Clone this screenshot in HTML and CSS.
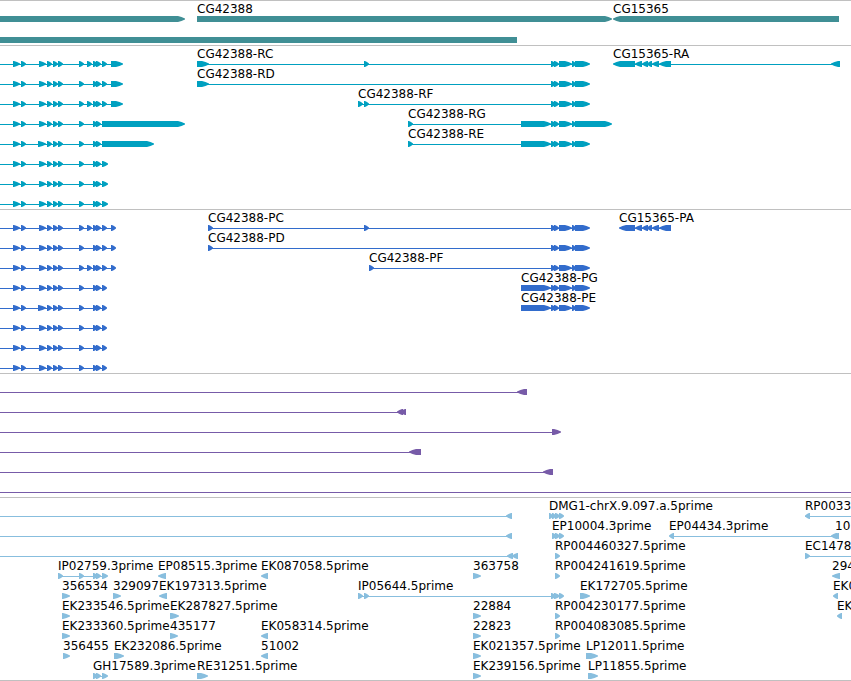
FILE: index.html
```html
<!DOCTYPE html>
<html lang="en">
<head>
  <meta charset="utf-8">
  <title>Gene Annotation Tracks</title>
  <link rel="stylesheet" href="styles.css">
</head>
<body>
  <main class="browser">
    <section class="track track-genes" id="genes" aria-label="Genes"></section>
    <section class="track track-transcripts" id="transcripts" aria-label="Transcripts"></section>
    <section class="track track-proteins" id="proteins" aria-label="Proteins"></section>
    <section class="track track-cdna" id="cdna" aria-label="cDNA"></section>
    <section class="track track-est" id="est" aria-label="EST"></section>
  </main>
  <script src="tracks.js"></script>
</body>
</html>
```
FILE: styles.css
```css
body {
  margin: 0;
  background-color: #fff;
  color: #000;
  font-family: "DejaVu Sans", sans-serif;
  font-size: 12px;
}
.browser {
  display: flex;
  flex-direction: column;
  overflow: hidden;
  border-bottom: 1px solid #c0c0c0;
}
.track {
  display: flex;
  flex-direction: column;
  padding: 2px 0 1px;
  border-top: 1px solid #c0c0c0;
}
.track:last-child {
  padding-bottom: 0;
}
.track-genes {
  gap: 1px;
  color: #408f95;
}
.track-transcripts {
  color: #00a0c0;
}
.track-proteins {
  color: #326ccc;
}
.track-cdna {
  color: #775ba8;
}
.track-est {
  color: #88bede;
}
.row {
  display: block;
  width: 100%;
  height: 20px;
  overflow: visible;
}
.intron,
.exon {
  fill: currentColor;
}
.intron {
  shape-rendering: crispEdges;
}
.label {
  fill: #000;
}
```
FILE: tracks.js
```js
const SVG = 'http://www.w3.org/2000/svg';
const BAR_TOP = 13;
const BAR_HEIGHT = 6;
const LABEL_BASELINE = 10;

// dir: 1 forward, -1 reverse, 0 no arrow head
function feature(name, dir, exons, from, to) {
  return { name, dir, exons, from, to };
}

// exons shared by the transcripts on the left edge
const start = [[13, 20], [21, 26], [39, 46], [47, 52], [53, 58], [58, 63], [79, 84]];
const startLong = start.map(e => e[0] === 39 ? [38, 46] : e);
const mid = [[93, 98], [96, 101]];
const extra = [[87, 92]];
// exons shared by CG42388
const end = [[551, 556], [554, 559], [559, 572], [572, 576]];
const tail = [...end, [575, 590]];
const minus = [[635, 642], [642, 648], [647, 652], [652, 659], [659, 671]];

const left = exons => feature('', 1, exons, 0);
const one = (name, from, to, dir = 1) => feature(name, dir, [[from, to]]);

const tracks = {
  genes: [
    [one('', -10, 185), one('CG42388', 197, 612), one('CG15365', 613, 839, -1)],
    [one('', -10, 517, 0)]
  ],
  transcripts: [
    [left([...start, ...extra, ...mid, [102, 107], [111, 123]]),
      feature('CG42388-RC', 1, [[197, 209], [364, 369], ...tail]),
      feature('CG15365-RA', -1, [[613, 635], ...minus, [831, 840]])],
    [left([...start, ...mid, [102, 107], [111, 123]]),
      feature('CG42388-RD', 1, [[197, 209], ...tail])],
    [left([...start, ...extra, ...mid, [102, 107], [111, 123]]),
      feature('CG42388-RF', 1, [[358, 363], [364, 369], ...tail])],
    [left([...start, ...mid, [102, 185]]),
      feature('CG42388-RG', 1, [[408, 413], [521, 551], ...end, [575, 612]])],
    [left([...startLong, ...mid, [102, 154]]),
      feature('CG42388-RE', 1, [[408, 413], [521, 551], ...tail])],
    [left([...start, ...mid, [102, 108]])],
    [left([...start, ...mid, [102, 108]])],
    [left([...start, ...mid, [102, 108]])]
  ],
  proteins: [
    [left([...start, ...extra, ...mid, [102, 107], [111, 116]]),
      feature('CG42388-PC', 1, [[208, 213], [364, 369], ...tail]),
      feature('CG15365-PA', -1, [[619, 635], ...minus])],
    [left([...start, ...mid, [102, 107], [111, 116]]),
      feature('CG42388-PD', 1, [[208, 213], ...tail])],
    [left([...start, ...extra, ...mid, [102, 107], [111, 116]]),
      feature('CG42388-PF', 1, [[369, 374], ...tail])],
    [left([...start, ...mid, [102, 107]]),
      feature('CG42388-PG', 1, [[521, 551], ...tail])],
    [left([...startLong, ...mid, [102, 107]]),
      feature('CG42388-PE', 1, [[521, 551], ...tail])],
    [left([...start, ...mid, [102, 107]])],
    [left([...start, ...mid, [102, 107]])],
    [left([...start, ...mid, [102, 107]])]
  ],
  cdna: [
    [feature('', -1, [[517, 527]], 0)],
    [feature('', -1, [[397, 403], [400, 406]], 0)],
    [feature('', 1, [[552, 561]], 0)],
    [feature('', -1, [[409, 421]], 0)],
    [feature('', -1, [[543, 553]], 0)],
    [feature('', 0, [], 0, '100%')]
  ],
  est: [
    [feature('', -1, [[506, 512]], 0),
      feature('DMG1-chrX.9.097.a.5prime', 1, [[549, 553], [552, 556], [555, 560], [559, 564]]),
      feature('RP0033', -1, [[805, 810]], 805, '100%')],
    [feature('', -1, [[506, 512]], 0),
      feature('EP10004.3prime', 1, [[552, 557], [555, 560], [559, 564]]),
      feature('EP04434.3prime', -1, [[669, 674], [831, 837], [834, 839]])],
    [feature('', -1, [[507, 513], [512, 518]], 0),
      one('RP004460327.5prime', 555, 560),
      feature('EC1478', 1, [[805, 810]], 805, '100%')],
    [feature('IP02759.3prime', 1, [[58, 63], [79, 84], ...mid, [102, 108]]),
      one('EP08515.3prime', 158, 166, -1),
      one('EK087058.5prime', 261, 268, -1),
      one('363758', 473, 481),
      one('RP004241619.5prime', 555, 560),
      one('294', 832, 840, -1)],
    [one('356534', 62, 70),
      one('329097', 113, 121),
      one('EK197313.5prime', 159, 167, -1),
      feature('IP05644.5prime', 1, [[358, 363], [364, 369], [551, 556], [554, 560], [559, 564]]),
      one('EK172705.5prime', 580, 590),
      one('EK0', 833, 838, -1)],
    [one('EK233546.5prime', 62, 70),
      one('EK287827.5prime', 170, 179),
      one('22884', 473, 481),
      one('RP004230177.5prime', 555, 560),
      one('EK', 837, 842, -1)],
    [one('EK233360.5prime', 62, 70),
      one('435177', 170, 178),
      one('EK058314.5prime', 261, 268, -1),
      one('22823', 473, 481),
      one('RP004083085.5prime', 555, 560)],
    [one('356455', 63, 70),
      one('EK232086.5prime', 114, 124),
      one('51002', 261, 268, -1),
      one('EK021357.5prime', 473, 481),
      one('LP12011.5prime', 586, 598)],
    [feature('GH17589.3prime', 1, [...mid, [102, 108]]),
      one('RE31251.5prime', 197, 208),
      one('EK239156.5prime', 473, 481),
      one('LP11855.5prime', 588, 598)]
  ]
};
tracks.est[1].push(one('10', 835, 839, -1));

function add(parent, tag, attrs) {
  const el = document.createElementNS(SVG, tag);
  for (const key in attrs) {
    el.setAttribute(key, attrs[key]);
  }
  parent.appendChild(el);
  return el;
}

// outline of an exon: a bar whose head bulges towards a blunt tip
function exonPoints(x1, x2, dir) {
  const tip = dir < 0 ? x1 : x2;
  const base = dir < 0 ? x2 : x1;
  const out = dir < 0 ? -1 : 1;
  const head = dir === 0 ? 0 : Math.min(7, x2 - x1 - 1);
  const shoulder = head / 2;
  const slope = dir === 0 ? 0 : 1;
  const blunt = dir === 0 ? BAR_HEIGHT / 2 : 0.5;
  const top = BAR_TOP;
  const bottom = BAR_TOP + BAR_HEIGHT;
  const middle = BAR_TOP + BAR_HEIGHT / 2;
  return [
    [base, top],
    [tip - out * head, top],
    [tip - out * shoulder, top + slope],
    [tip, middle - blunt],
    [tip, middle + blunt],
    [tip - out * shoulder, bottom - slope],
    [tip - out * head, bottom],
    [base, bottom]
  ].join(' ');
}

function drawFeature(row, f) {
  const first = f.exons[0];
  const last = f.exons[f.exons.length - 1];
  const from = f.from !== undefined ? f.from : first[0] + 2;

  if (f.to) {
    // runs off the right edge
    add(row, 'rect', { class: 'intron', x: from, y: 16, width: f.to, height: 1 });
  } else if (f.exons.length > 1 || f.from !== undefined) {
    add(row, 'rect', { class: 'intron', x: from, y: 16, width: last[0] + 2 - from, height: 1 });
  }

  f.exons.forEach(([x1, x2]) => {
    add(row, 'polygon', { class: 'exon', points: exonPoints(x1, x2, f.dir) });
  });

  if (f.name) {
    add(row, 'text', { class: 'label', x: first[0], y: LABEL_BASELINE }).textContent = f.name;
  }
}

for (const id in tracks) {
  const track = document.getElementById(id);
  tracks[id].forEach(features => {
    const row = add(track, 'svg', { class: 'row' });
    features.forEach(f => drawFeature(row, f));
  });
}
```
